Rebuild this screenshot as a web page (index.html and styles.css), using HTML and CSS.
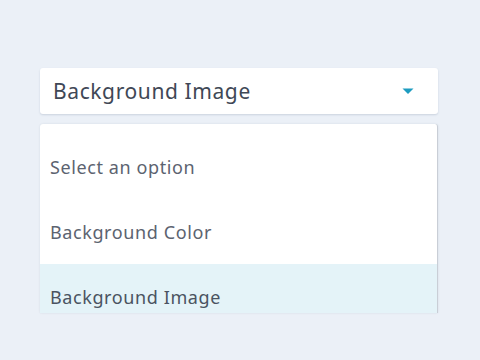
FILE: index.html
```html
<!DOCTYPE html>
<html>
<head>
<meta charset="utf-8">
<link rel="stylesheet" href="styles.css">
</head>
<body>
<div class="wrap">
  <div class="select">
    <span class="value">Background Image</span>
    <svg class="caret" width="12" height="7" viewBox="0 0 12 7"><path d="M0.5 0.5 L11.5 0.5 L6 6 Z" fill="#1d9cc0"/></svg>
  </div>
  <div class="menu">
    <div class="option">Select an option</div>
    <div class="option">Background Color</div>
    <div class="option active">Background Image</div>
  </div>
</div>
</body>
</html>
```
FILE: styles.css
```css
html, body {
  margin: 0;
  padding: 0;
  background: #ebf0f7;
  width: 480px;
  height: 360px;
  overflow: hidden;
}
.wrap {
  padding: 68px 42px 0 40px;
  display: flex;
  flex-direction: column;
  gap: 10px;
  font-family: "Noto Sans", Lato, sans-serif;
}
.select {
  height: 46px;
  background: #fff;
  border-radius: 3px;
  box-shadow: 0 1px 2px rgba(60, 80, 110, 0.18);
  display: flex;
  align-items: center;
  justify-content: space-between;
  padding: 0 24px 0 13px;
}
.value {
  font-size: 21px;
  color: #3f4856;
  letter-spacing: 0.6px;
}
.caret {
  display: block;
}
.menu {
  background: #fff;
  border-radius: 3px 3px 0 0;
  border-right: 1px solid #c9ced6;
  box-shadow: 0 0 2px rgba(60, 80, 110, 0.15);
  padding-top: 10px;
  height: 179px;
  overflow: hidden;
}
.option {
  height: 65px;
  display: flex;
  align-items: center;
  padding: 0 10px;
  font-size: 18px;
  color: #5c6370;
  letter-spacing: 0.6px;
}
.option.active {
  background: #e4f3f8;
  color: #4a5361;
}
```
